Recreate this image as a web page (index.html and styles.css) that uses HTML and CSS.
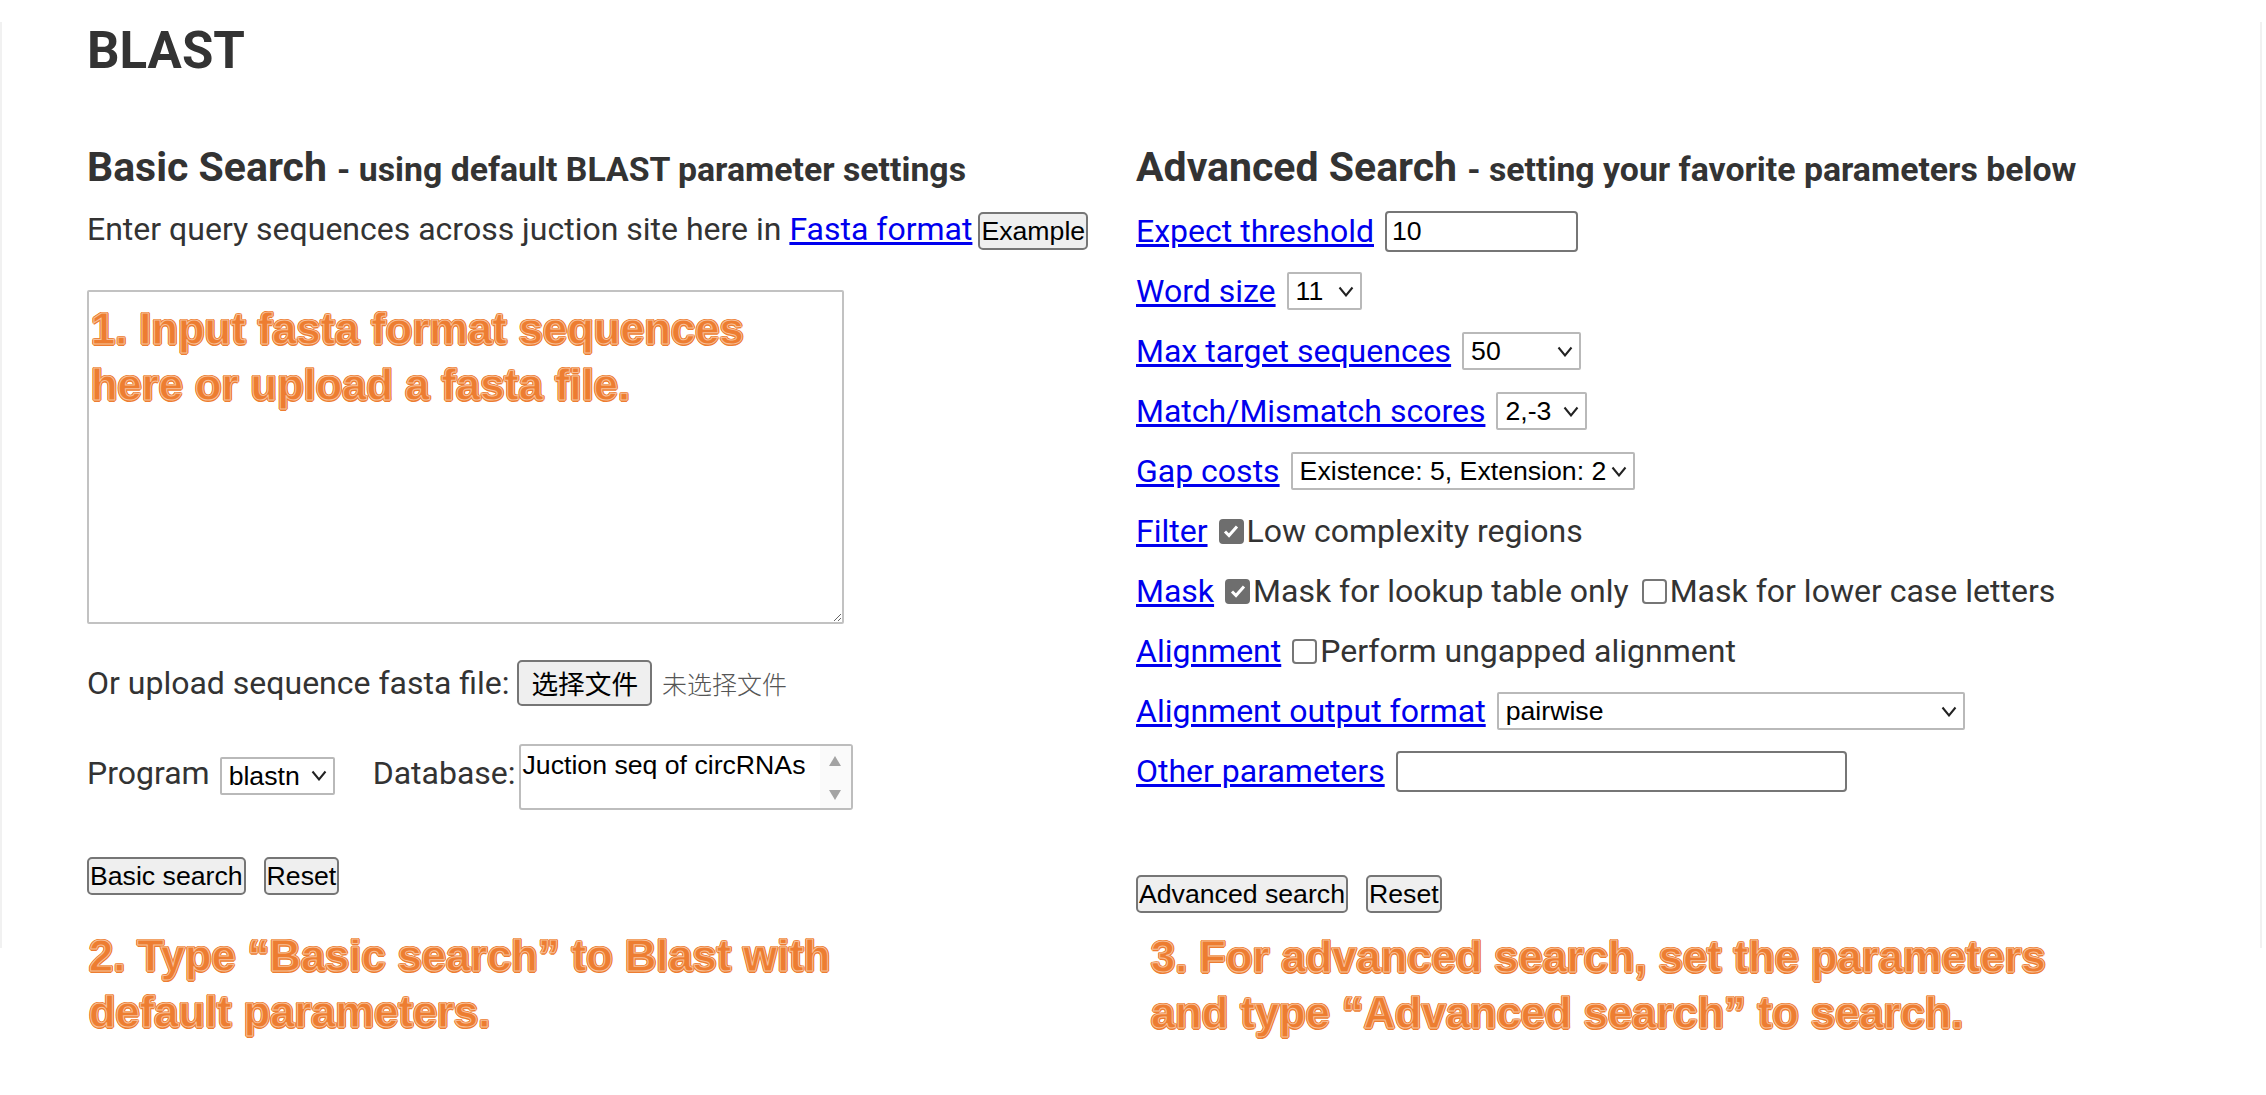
FILE: index.html
```html
<!DOCTYPE html>
<html lang="en">
<head>
<meta charset="utf-8">
<title>BLAST</title>
<link rel="stylesheet" href="styles.css">
</head>
<body>
<div class="page">
  <h1 class="title">BLAST</h1>
  <div class="columns">
    <section class="col">
      <h3 class="section-title">Basic Search <small>- using default BLAST parameter settings</small></h3>
      <p class="intro">Enter query sequences across juction site here in <a href="#">Fasta format</a><button class="btn btn-example" type="button">Example</button></p>
      <div class="query-box">
        <textarea class="query"></textarea>
        <p class="note note-query">1. Input fasta format sequences<br>here or upload a fasta file.</p>
      </div>
      <p class="upload">Or upload sequence fasta file: <span class="file"><button class="btn btn-file" type="button">选择文件</button><span class="file-name">未选择文件</span></span></p>
      <div class="program-row">
        <span class="row-text">Program</span>
        <select class="sel sel-program"><option>blastn</option></select>
        <span class="row-text db-label">Database:</span>
        <div class="listbox" role="listbox">
          <span class="listbox-item">Juction seq of circRNAs</span>
          <span class="listbox-scroll"><span class="arrow arrow-up"></span><span class="arrow arrow-down"></span></span>
        </div>
      </div>
      <div class="actions">
        <button class="btn" type="button">Basic search</button>
        <button class="btn" type="button">Reset</button>
      </div>
      <p class="note note-basic">2. Type “Basic search” to Blast with<br>default parameters.</p>
    </section>
    <section class="col">
      <h3 class="section-title">Advanced Search <small>- setting your favorite parameters below</small></h3>
      <div class="params">
        <div class="param"><a href="#">Expect threshold</a><input class="txt txt-expect" type="text" value="10"></div>
        <div class="param"><a href="#">Word size</a><select class="sel sel-word"><option>11</option></select></div>
        <div class="param"><a href="#">Max target sequences</a><select class="sel sel-max"><option>50</option></select></div>
        <div class="param"><a href="#">Match/Mismatch scores</a><select class="sel sel-match"><option>2,-3</option></select></div>
        <div class="param"><a href="#">Gap costs</a><select class="sel sel-gap"><option>Existence: 5, Extension: 2</option></select></div>
        <div class="param"><a href="#">Filter</a><input class="chk" type="checkbox" checked><span>Low complexity regions</span></div>
        <div class="param"><a href="#">Mask</a><input class="chk" type="checkbox" checked><span>Mask for lookup table only</span><input class="chk chk-next" type="checkbox"><span>Mask for lower case letters</span></div>
        <div class="param"><a href="#">Alignment</a><input class="chk" type="checkbox"><span>Perform ungapped alignment</span></div>
        <div class="param"><a href="#">Alignment output format</a><select class="sel sel-format"><option>pairwise</option></select></div>
        <div class="param"><a href="#">Other parameters</a><input class="txt txt-other" type="text"></div>
      </div>
      <div class="actions actions-adv">
        <button class="btn" type="button">Advanced search</button>
        <button class="btn" type="button">Reset</button>
      </div>
      <p class="note note-adv">3. For advanced search, set the parameters<br>and type “Advanced search” to search.</p>
    </section>
  </div>
</div>
</body>
</html>
```
FILE: styles.css
```css
html, body {
  margin: 0;
  padding: 0;
  background: #ffffff;
  min-height: 1095px;
}

body {
  font-family: Roboto, "Liberation Sans", sans-serif;
  font-size: 32px;
  color: #333333;
}

a {
  color: #0000ee;
  text-decoration: underline;
}

.page {
  position: relative;
  margin-top: 22px;
  width: 2262px;
  box-sizing: border-box;
  padding-left: 87px;
}

.page::before {
  content: "";
  position: absolute;
  top: 0;
  left: 0;
  right: 0;
  height: 926px;
  border-left: 2px solid #f1f1f1;
  border-right: 2px solid #f1f1f1;
  pointer-events: none;
}

.title {
  margin: 0;
  padding-top: 3px;
  font-size: 51px;
  line-height: 52px;
  font-weight: 700;
}

.columns {
  display: grid;
  grid-template-columns: 1049px 1fr;
  margin-top: 65px;
}

.section-title {
  margin: 0;
  font-size: 41px;
  line-height: 50px;
  font-weight: 700;
  white-space: nowrap;
}

.section-title small {
  font-size: 33.8px;
  font-weight: 700;
}

.intro {
  margin: 9px 0 0;
  line-height: 50px;
  white-space: nowrap;
}

.btn {
  font-family: "Liberation Sans", Arial, sans-serif;
  font-size: 26.67px;
  color: #000000;
  background: #efefef;
  border: 2px solid #767676;
  border-radius: 5px;
  height: 38px;
  padding: 0 1px;
  margin: 0;
  line-height: 32px;
}

.btn-example {
  margin-left: 6px;
}

.query-box {
  position: relative;
  width: 757px;
  height: 334px;
  margin-top: 36px;
}

.query {
  display: block;
  box-sizing: border-box;
  width: 757px;
  height: 334px;
  margin: 0;
  border: 2px solid #c2c2c2;
  border-radius: 2px;
  background: #ffffff;
}

.note {
  margin: 0;
  font-family: "Liberation Sans", Arial, sans-serif;
  font-weight: 700;
  font-size: 43.5px;
  line-height: 56px;
  color: #ed7d31;
  -webkit-text-stroke: 1px #f7bf98;
  text-shadow: 1.5px 0 #ed7d31, -1.5px 0 #ed7d31, 0 1.5px #ed7d31, 0 -1.5px #ed7d31,
    1px 1px #ed7d31, -1px -1px #ed7d31, 1px -1px #ed7d31, -1px 1px #ed7d31;
  white-space: nowrap;
}

.note-query {
  position: absolute;
  left: 4px;
  top: 11px;
  pointer-events: none;
}

.upload {
  margin: 34px 0 0;
  line-height: 50px;
  white-space: nowrap;
}

.file {
  display: inline-flex;
  align-items: center;
  vertical-align: middle;
  position: relative;
  top: -3px;
}

.btn-file {
  font-family: "Noto Sans CJK SC", sans-serif;
  height: 46px;
  padding: 0 12px;
  line-height: 40px;
}

.file-name {
  margin-left: 10px;
  font-family: "Noto Sans CJK SC", sans-serif;
  font-size: 25px;
  font-weight: 300;
  color: #555555;
}

.program-row {
  display: flex;
  align-items: flex-start;
  height: 66px;
  margin-top: 33px;
}

.row-text {
  line-height: 58px;
}

.sel {
  -webkit-appearance: none;
  appearance: none;
  box-sizing: border-box;
  height: 38px;
  margin: 0;
  padding: 0 26px 0 7px;
  font-family: "Liberation Sans", Arial, sans-serif;
  font-size: 26.67px;
  color: #000000;
  background: #ffffff url("data:image/svg+xml,%3Csvg xmlns='http://www.w3.org/2000/svg' width='16' height='11' viewBox='0 0 16 11'%3E%3Cpath d='M1.5 1.5l6.5 8 6.5-8' fill='none' stroke='%23222' stroke-width='2'/%3E%3C/svg%3E") no-repeat right 6px center;
  border: 2px solid #b9b9b9;
  border-radius: 2px;
}

.sel-program {
  width: 115px;
  margin: 13px 0 0 10px;
}

.db-label {
  margin-left: 38px;
}

.listbox {
  box-sizing: border-box;
  display: flex;
  justify-content: space-between;
  width: 334px;
  height: 66px;
  margin-left: 3px;
  border: 2px solid #bdbdbd;
  border-radius: 3px;
  background: #ffffff;
}

.listbox-item {
  font-family: "Liberation Sans", Arial, sans-serif;
  font-size: 26.67px;
  line-height: 30px;
  color: #000000;
  padding: 4px 0 0 2px;
}

.listbox-scroll {
  display: flex;
  flex-direction: column;
  justify-content: space-between;
  align-items: center;
  width: 31px;
  padding: 10px 0 8px;
  box-sizing: border-box;
  background: #fafafa;
}

.arrow {
  width: 0;
  height: 0;
  border-left: 6px solid transparent;
  border-right: 6px solid transparent;
}

.arrow-up {
  border-bottom: 10px solid #a3a3a3;
}

.arrow-down {
  border-top: 10px solid #a3a3a3;
}

.actions {
  display: flex;
  gap: 18px;
  margin-top: 47px;
}

.note-basic {
  margin-top: 33px;
  margin-left: 2px;
}

.params {
  margin-top: 6px;
}

.param {
  display: flex;
  align-items: center;
  height: 60px;
  white-space: nowrap;
}

.txt {
  box-sizing: border-box;
  height: 41px;
  margin: 0 0 0 11px;
  padding: 0 5px;
  font-family: "Liberation Sans", Arial, sans-serif;
  font-size: 26.67px;
  color: #000000;
  border: 2px solid #767676;
  border-radius: 4px;
  background: #ffffff;
}

.txt-expect {
  width: 193px;
}

.txt-other {
  width: 451px;
}

.param .sel {
  margin-left: 11px;
}

.sel-word {
  width: 75px;
}

.sel-max {
  width: 119px;
}

.sel-match {
  width: 91px;
}

.sel-gap {
  width: 344px;
}

.sel-format {
  width: 468px;
}

.chk {
  -webkit-appearance: none;
  appearance: none;
  box-sizing: border-box;
  width: 25px;
  height: 25px;
  margin: 0 3px 0 11px;
  border: 2px solid #767676;
  border-radius: 4px;
  background: #ffffff;
}

.chk:checked {
  border-color: #6e6e6e;
  background: #6e6e6e url("data:image/svg+xml,%3Csvg xmlns='http://www.w3.org/2000/svg' width='20' height='20' viewBox='0 0 20 20'%3E%3Cpath d='M4 10.5l4 4 8-9' fill='none' stroke='%23fff' stroke-width='3'/%3E%3C/svg%3E") no-repeat center;
}

.chk-next {
  margin-left: 13px;
}

.actions-adv {
  margin-top: 74px;
}

.note-adv {
  margin-top: 16px;
  margin-left: 15px;
}
```
